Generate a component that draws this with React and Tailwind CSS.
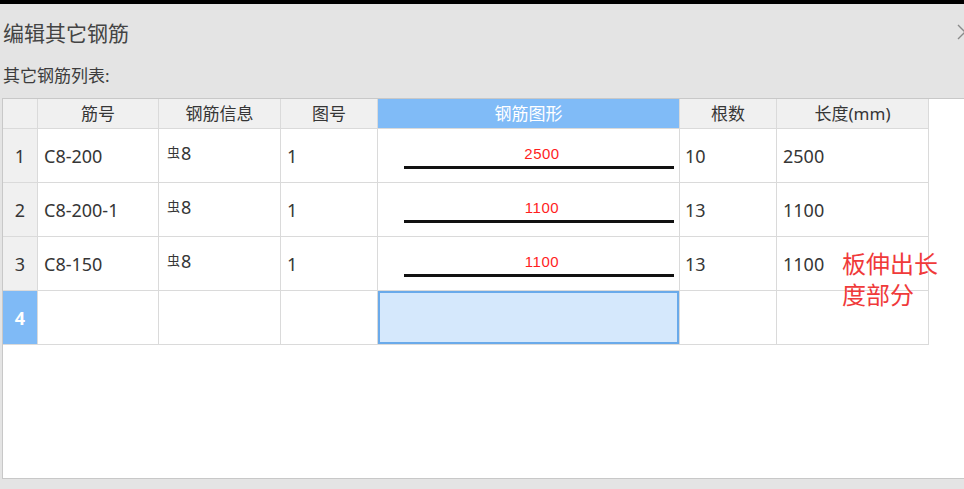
import React from 'react'

// 其它钢筋列表数据
const rows = [
  { id: 1, no: 'C8-200', dia: '8', fig: '1', len: 2500, count: 10, total: 2500 },
  { id: 2, no: 'C8-200-1', dia: '8', fig: '1', len: 1100, count: 13, total: 1100 },
  { id: 3, no: 'C8-150', dia: '8', fig: '1', len: 1100, count: 13, total: 1100 },
]

const cols = 'grid grid-cols-[35px_121px_122px_97px_302px_97px_152px]'
const cell = 'border-r border-b border-[#dadada] flex items-center'

// 钢筋图形 — 直线 + 长度标注
const BarShape = ({ len }) => (
  <div className={`${cell} flex-col !items-start justify-end pl-[26px] pb-[13px]`}>
    <div className="w-[270px] text-center text-[15px] leading-[14px] text-[#ff1e1e] font-['Liberation_Sans',sans-serif] tracking-[0.5px] mb-[5px] pl-[6px]">
      {len}
    </div>
    <div className="w-[270px] h-[3px] bg-[#111]" />
  </div>
)

const App = () => {
  return (
    <div className="relative w-[964px] h-[489px] overflow-hidden bg-[#e4e4e4] text-[#363636] font-['Noto_Sans','Noto_Sans_CJK_SC',sans-serif]">
      <div className="h-[4px] bg-black" />

      {/* 标题栏 */}
      <div className="h-[58px] flex items-center justify-between pl-[3px]">
        <span className="text-[21px] leading-none text-[#444]">编辑其它钢筋</span>
        <svg width="16" height="16" viewBox="0 0 16 16" className="-mr-[9px] mb-[3px]">
          <path d="M1 1 L15 15 M15 1 L1 15" stroke="#8a8a8a" strokeWidth="1.4" fill="none" />
        </svg>
      </div>

      <div className="h-[26px] flex items-center pl-[3px] mb-[10px] text-[17px] leading-none text-[#3c3c3c]">
        其它钢筋列表:
      </div>

      {/* 表格面板 */}
      <div className="ml-[2px] w-[980px] h-[381px] bg-white border border-[#c8c8c8]">
        {/* 表头 */}
        <div className={`${cols} h-[30px] text-[17px] leading-none`}>
          <div className={`${cell} bg-[#f0f0f0]`} />
          <div className={`${cell} justify-center bg-[#f0f0f0]`}>筋号</div>
          <div className={`${cell} justify-center bg-[#f0f0f0]`}>钢筋信息</div>
          <div className={`${cell} justify-center bg-[#f0f0f0]`}>图号</div>
          <div className={`${cell} justify-center bg-[#80bbf7] text-white`}>钢筋图形</div>
          <div className={`${cell} justify-center bg-[#f0f0f0]`}>根数</div>
          <div className={`${cell} justify-center bg-[#f0f0f0]`}>长度(mm)</div>
        </div>

        {rows.map((r) => (
          <div key={r.id} className={`${cols} h-[54px] text-[18px] leading-none`}>
            <div className={`${cell} justify-center bg-[#f0f0f0]`}>{r.id}</div>
            <div className={`${cell} pl-[6px]`}>{r.no}</div>
            <div className={`${cell} pl-[8px]`}>
              <span className="-translate-y-[3px] flex items-center">
                <span className="text-[13px] mr-[1px]">虫</span>
                {r.dia}
              </span>
            </div>
            <div className={`${cell} pl-[6px]`}>{r.fig}</div>
            <BarShape len={r.len} />
            <div className={`${cell} pl-[5px]`}>{r.count}</div>
            <div className={`${cell} pl-[6px]`}>{r.total}</div>
          </div>
        ))}

        {/* 新增行（选中） */}
        <div className={`${cols} h-[54px] text-[18px] leading-none`}>
          <div className={`${cell} justify-center bg-[#7fbaf6] text-white font-bold`}>4</div>
          <div className={cell} />
          <div className={cell} />
          <div className={cell} />
          <div className={`${cell} bg-[#d5e8fc] shadow-[inset_0_0_0_2px_#6aaaea]`} />
          <div className={cell} />
          <div className={cell} />
        </div>
      </div>

      {/* 红色批注 */}
      <div className="absolute left-[842px] top-[248px] w-[100px] text-[24px] leading-[31px] text-[#f03a3a]">
        板伸出长度部分
      </div>
    </div>
  )
}

export default App
